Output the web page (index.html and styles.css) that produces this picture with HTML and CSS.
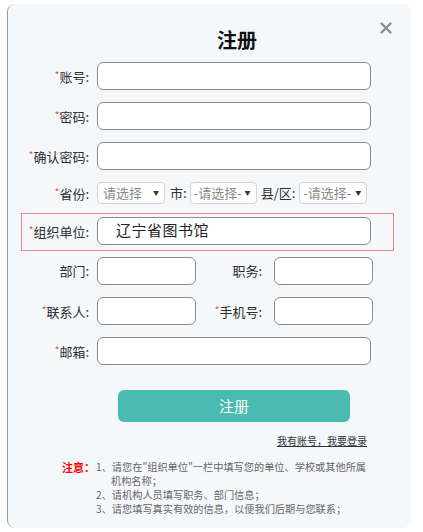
FILE: index.html
```html
<!DOCTYPE html>
<html lang="zh-CN">
<head>
<meta charset="utf-8">
<title>注册</title>
<link rel="stylesheet" href="styles.css">
</head>
<body>
<div class="modal">
  <svg class="close" width="12" height="12" viewBox="0 0 12 12"><path d="M1.5 1.5L10.5 10.5M10.5 1.5L1.5 10.5" stroke="#8a8a8a" stroke-width="2.2" stroke-linecap="round"/></svg>
  <h1 class="title">注册</h1>
  <div class="form">
    <div class="row">
      <label class="lbl"><span class="req">*</span>账号:</label>
      <div class="input"></div>
    </div>
    <div class="row">
      <label class="lbl"><span class="req">*</span>密码:</label>
      <div class="input"></div>
    </div>
    <div class="row">
      <label class="lbl"><span class="req">*</span>确认密码:</label>
      <div class="input"></div>
    </div>
    <div class="row row-select">
      <label class="lbl"><span class="req">*</span>省份:</label>
      <div class="select s1"><span>请选择</span><span class="arrow">▼</span></div>
      <span class="sublbl city">市:</span>
      <div class="select s2"><span>-请选择-</span><span class="arrow">▼</span></div>
      <span class="sublbl county">县/区:</span>
      <div class="select s3"><span>-请选择-</span><span class="arrow">▼</span></div>
    </div>
    <div class="row row-error">
      <label class="lbl"><span class="req">*</span>组织单位:</label>
      <div class="input filled">辽宁省图书馆</div>
    </div>
    <div class="row">
      <label class="lbl">部门:</label>
      <div class="input half"></div>
      <label class="lbl2">职务:</label>
      <div class="input half"></div>
    </div>
    <div class="row">
      <label class="lbl"><span class="req">*</span>联系人:</label>
      <div class="input half"></div>
      <label class="lbl2 tight"><span class="req">*</span>手机号:</label>
      <div class="input half"></div>
    </div>
    <div class="row">
      <label class="lbl"><span class="req">*</span>邮箱:</label>
      <div class="input"></div>
    </div>
    <button class="submit">注册</button>
    <div class="login"><a href="#">我有账号，我要登录</a></div>
    <div class="notes">
      <span class="notice">注意：</span>
      <ol class="list">
        <li>1、请您在"组织单位"一栏中填写您的单位、学校或其他所属机构名称；</li>
        <li>2、请机构人员填写职务、部门信息；</li>
        <li>3、请您填写真实有效的信息，以便我们后期与您联系；</li>
      </ol>
    </div>
  </div>
</div>
</body>
</html>
```
FILE: styles.css
```css
html, body {
  margin: 0;
  padding: 0;
  background: #ffffff;
  font-family: "Noto Sans CJK SC", "Liberation Sans", sans-serif;
}

.modal {
  position: relative;
  box-sizing: border-box;
  margin: 4px 12px 0 7px;
  height: 524px;
  background: #f5f8fb;
  border-left: 1px solid #9a9a9a;
  border-radius: 8px;
  padding: 22px 0 0 13px;
}

.close {
  position: absolute;
  top: 18px;
  right: 19px;
}

.title {
  margin: 0 0 4px 0;
  padding-left: 42px;
  text-align: center;
  font-size: 20px;
  line-height: 28px;
  font-weight: bold;
  color: #111;
}

.form {
  width: 373px;
}

.row {
  display: flex;
  align-items: center;
  box-sizing: border-box;
  width: 373px;
  padding: 3px 22px 5px 3px;
  border: 1px solid transparent;
  margin-bottom: 2px;
}

.row-select {
  padding-bottom: 6px;
}

.row-error {
  border-color: #e98b8b;
}

.lbl {
  width: 64px;
  margin-right: 8px;
  flex: none;
  text-align: right;
  font-size: 13px;
  line-height: 18px;
  color: #2e2e2e;
  white-space: nowrap;
}

.lbl2 {
  width: 66px;
  margin-right: 12px;
  flex: none;
  text-align: right;
  font-size: 13px;
  line-height: 18px;
  color: #2e2e2e;
  white-space: nowrap;
}

.req {
  color: #f04848;
  font-size: 10px;
  vertical-align: 3px;
}

.input {
  box-sizing: border-box;
  width: 274px;
  height: 28px;
  border: 1px solid #8c8c8c;
  border-radius: 6px;
  background: #fff;
  flex: none;
}

.input.half {
  width: 99px;
}

.input.filled {
  padding-left: 18px;
  font-size: 15px;
  line-height: 24px;
  color: #222;
  letter-spacing: 0.5px;
}

.select {
  box-sizing: border-box;
  display: flex;
  align-items: center;
  justify-content: space-between;
  height: 22px;
  border: 1px solid #d3d3d3;
  border-radius: 4px;
  background: #fff;
  padding: 0 5px 0 3px;
  font-size: 13px;
  line-height: 18px;
  color: #8a8a8a;
  flex: none;
}

.s1 { width: 68px; padding-left: 5px; }
.s2 { width: 67px; }
.s3 { width: 68px; }

.arrow {
  font-size: 6px;
  color: #333;
}

.sublbl {
  font-size: 13px;
  line-height: 18px;
  color: #2e2e2e;
}

.city {
  margin: 0 3px 0 5px;
}

.county {
  margin: 0 4px 0 4px;
}

.submit {
  display: block;
  margin: 19px 0 0 97px;
  width: 232px;
  height: 32px;
  border: none;
  border-radius: 6px;
  background: #4bbab1;
  color: #fff;
  font-family: inherit;
  font-size: 15px;
  line-height: 20px;
  padding: 0;
}

.login {
  margin-top: 12px;
  width: 346px;
  text-align: right;
  font-size: 10px;
  line-height: 14px;
}

.login a {
  color: #333;
  text-decoration: underline;
}

.notes {
  display: flex;
  margin-top: 12px;
  font-size: 10.2px;
  line-height: 14px;
  color: #666;
}

.notice {
  margin-left: 41px;
  width: 34px;
  flex: none;
  color: #f00;
  font-weight: bold;
  font-size: 11px;
}

.list {
  margin: 0;
  padding: 0;
  list-style: none;
  width: 275px;
}

.list li {
  padding-left: 15px;
  text-indent: -15px;
}
```
